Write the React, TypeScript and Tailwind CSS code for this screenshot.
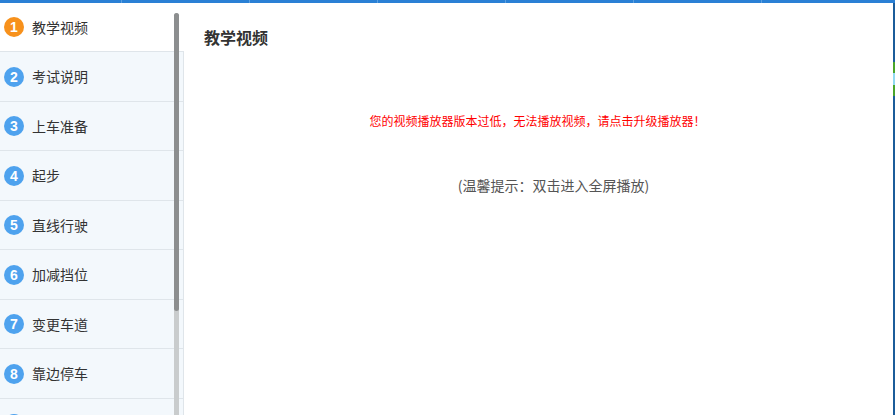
const lessons = [
  { n: 1, label: "教学视频", h: "h-[49px]" },
  { n: 2, label: "考试说明", h: "h-[50px]" },
  { n: 3, label: "上车准备", h: "h-[49px]" },
  { n: 4, label: "起步", h: "h-[50px]" },
  { n: 5, label: "直线行驶", h: "h-[49px]" },
  { n: 6, label: "加减挡位", h: "h-[50px]" },
  { n: 7, label: "变更车道", h: "h-[49px]" },
  { n: 8, label: "靠边停车", h: "h-[50px]" },
  { n: 9, label: "掉头", h: "h-[50px]" },
];

const tabs = ["w-[122px]", "w-[128px]", "w-[128px]", "w-[128px]", "w-[128px]", "w-[128px]", "flex-1"];

export default function App() {
  const active = 1;

  return (
    <div className="flex h-[415px] w-[895px] flex-col overflow-hidden bg-white font-['Noto_Sans_CJK_SC','Liberation_Sans',sans-serif]">
      {/* top tab strip, only its bottom edge is visible */}
      <div className="flex h-[3px] shrink-0 bg-[#2a80d5]">
        {tabs.map((w, i) => (
          <div key={i} className={`${w} h-full border-r border-[#5c9fe0] bg-[#2a80d5] last:border-r-0`} />
        ))}
      </div>

      <div className="flex min-h-0 flex-1">
        <aside className="relative w-[184px] shrink-0 overflow-hidden">
          {lessons.map((item) => {
            const isActive = item.n === active;
            return (
              <div
                key={item.n}
                className={`flex ${item.h} items-center border-b border-[#dfe5ea] ${
                  isActive ? "bg-white" : "border-r bg-[#f3f8fc]"
                }`}
              >
                <span
                  className={`ml-[4px] flex h-[20px] w-[20px] shrink-0 items-center justify-center rounded-full font-['Liberation_Sans',sans-serif] text-[14px] font-bold leading-none text-white ${
                    isActive ? "bg-[#f7911c]" : "bg-[#4ea2ee]"
                  }`}
                >
                  {item.n}
                </span>
                <span className="ml-[8px] text-[14px] text-[#333]">{item.label}</span>
              </div>
            );
          })}

          {/* scrollbar */}
          <div className="absolute bottom-0 left-[174px] top-[10px] w-[5px] rounded-t-full bg-[#c9cccd]" />
          <div className="absolute left-[174px] top-[10px] h-[298px] w-[5px] rounded-full bg-[#8c8e8f]" />
        </aside>

        <main className="flex-1 pl-[20px] pt-[24px]">
          <h2 className="text-[16px] font-bold leading-[20px] text-[#333]">教学视频</h2>
          <p className="mt-[66px] pr-[22px] text-center text-[12px] leading-[16px] text-[#ff0000]">
            您的视频播放器版本过低，无法播放视频，请点击升级播放器！
          </p>
          <p className="mt-[47px] pl-[10px] text-center text-[14px] leading-[18px] text-[#555]">
            (温馨提示：双击进入全屏播放)
          </p>
        </main>

        {/* right edge of outer frame */}
        <div className="flex w-[2px] shrink-0 flex-col bg-[#1b5c9a]">
          <div className="h-[59px]" />
          <div className="h-[11px] bg-[#4aa52a]" />
          <div className="h-[12px] bg-[#92d9f2]" />
          <div className="h-[11px] bg-[#4aa52a]" />
        </div>
      </div>
    </div>
  );
}
